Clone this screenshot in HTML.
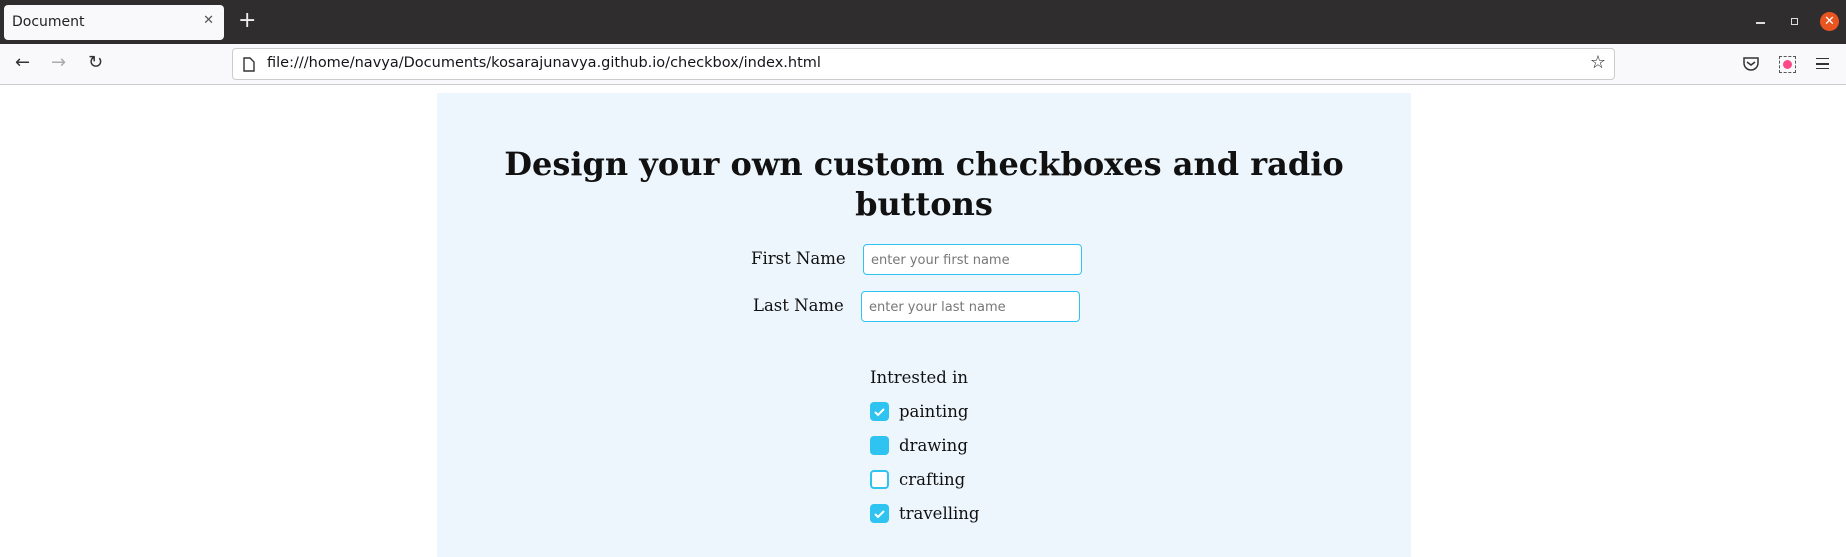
<!DOCTYPE html>
<html><head><meta charset="utf-8"><style>
*{box-sizing:border-box;margin:0;padding:0}
body{width:1846px;height:557px;overflow:hidden;background:#fff;font-family:"DejaVu Serif","Liberation Serif",serif;position:relative}
.tabbar{position:absolute;left:0;top:0;width:1846px;height:44px;background:#2f2d2e}
.tab{position:absolute;left:4px;top:5px;width:220px;height:35px;background:#f9f9fb;border-radius:4px;font:14px "DejaVu Sans",sans-serif;color:#222;padding:9px 8px}
.tab .x{position:absolute;right:10px;top:8px;color:#555;font-size:13px}
.plus{position:absolute;left:238px;top:8px;color:#eee;font:22px "DejaVu Sans",sans-serif}
.toolbar{position:absolute;left:0;top:44px;width:1846px;height:41px;background:#f9f9fb;border-bottom:1px solid #ccc}
.url{position:absolute;left:232px;top:4px;width:1383px;height:32px;background:#fff;border:1px solid #ccc;border-radius:4px;font:14.5px "DejaVu Sans",sans-serif;color:#15141a;padding:6px 0 0 34px}
.ic{position:absolute;font:18px "DejaVu Sans",sans-serif;color:#333}
.panel{position:absolute;left:437px;top:93px;width:974px;height:464px;background:#eef6fd}
h1{position:absolute;left:437px;top:144px;width:974px;text-align:center;font:bold 32px/40px "DejaVu Serif",serif;color:#111}
.lbl{position:absolute;font-size:16.5px;color:#111}
.inp{position:absolute;width:219px;height:31px;border:1.5px solid #2ec3f0;border-radius:4px;background:#fff;font:13px "DejaVu Sans",sans-serif;color:#777;padding:8px 7px}
.cb{position:absolute;left:870px;width:19px;height:19px;border-radius:4px;background:#2ec3f0}
.cb.e{background:#fff;border:2px solid #2ec3f0}
.cb svg{position:absolute;left:3px;top:4px}
</style></head><body>
<div class="tabbar"><div class="tab">Document<span class="x">✕</span></div><div class="plus">+</div>
<div style="position:absolute;left:1756px;top:22px;width:9px;height:1.5px;background:#ddd"></div>
<div style="position:absolute;left:1791px;top:18px;width:7px;height:7px;border:1.5px solid #ddd"></div>
<div style="position:absolute;left:1820px;top:12px;width:19px;height:19px;border-radius:50%;background:#e95420;color:#fff;font:13px 'DejaVu Sans';text-align:center;line-height:19px">✕</div>
</div>
<div class="toolbar">
<span class="ic" style="left:15px;top:8px">←</span><span class="ic" style="left:51px;top:8px;color:#aaa">→</span><span class="ic" style="left:88px;top:8px">↻</span>
<div class="url"><svg style="position:absolute;left:10px;top:8px" width="12" height="15"><path d="M1 1h6l4 4v9H1z" fill="none" stroke="#333" stroke-width="1.4"/></svg>file:///home/navya/Documents/kosarajunavya.github.io/checkbox/index.html<span style="position:absolute;right:8px;top:3px;font-size:18px">☆</span></div>
<svg style="position:absolute;left:1743px;top:13px" width="16" height="14"><path d="M1 1h14v5a7 7 0 0 1-14 0z" fill="none" stroke="#333" stroke-width="1.5"/><path d="M4 5l4 3 4-3" fill="none" stroke="#333" stroke-width="1.5"/></svg>
<div style="position:absolute;left:1779px;top:12px;width:17px;height:17px;border:1.5px dashed #555"></div>
<div style="position:absolute;left:1783px;top:16px;width:9px;height:9px;border-radius:50%;background:#f05;opacity:.7"></div>
<div style="position:absolute;left:1816px;top:14px;width:13px;height:11px;border-top:1.5px solid #333;border-bottom:1.5px solid #333"></div>
<div style="position:absolute;left:1816px;top:19px;width:13px;height:1.5px;background:#333"></div>
</div>
<div class="panel"></div>
<h1>Design your own custom checkboxes and radio<br>buttons</h1>
<div class="lbl" style="left:751px;top:249px">First Name</div>
<div class="inp" style="left:863px;top:244px">enter your first name</div>
<div class="lbl" style="left:753px;top:296px">Last Name</div>
<div class="inp" style="left:861px;top:291px">enter your last name</div>
<div class="lbl" style="left:870px;top:368px">Intrested in</div>
<div class="cb" style="top:402px"><svg width="13" height="11"><path d="M2 6l3 3 6-6" fill="none" stroke="#fff" stroke-width="2"/></svg></div>
<div class="lbl" style="left:899px;top:402px">painting</div>
<div class="cb" style="top:436px"></div>
<div class="lbl" style="left:899px;top:436px">drawing</div>
<div class="cb e" style="top:470px"></div>
<div class="lbl" style="left:899px;top:470px">crafting</div>
<div class="cb" style="top:504px"><svg width="13" height="11"><path d="M2 6l3 3 6-6" fill="none" stroke="#fff" stroke-width="2"/></svg></div>
<div class="lbl" style="left:899px;top:504px">travelling</div>
</body></html>
